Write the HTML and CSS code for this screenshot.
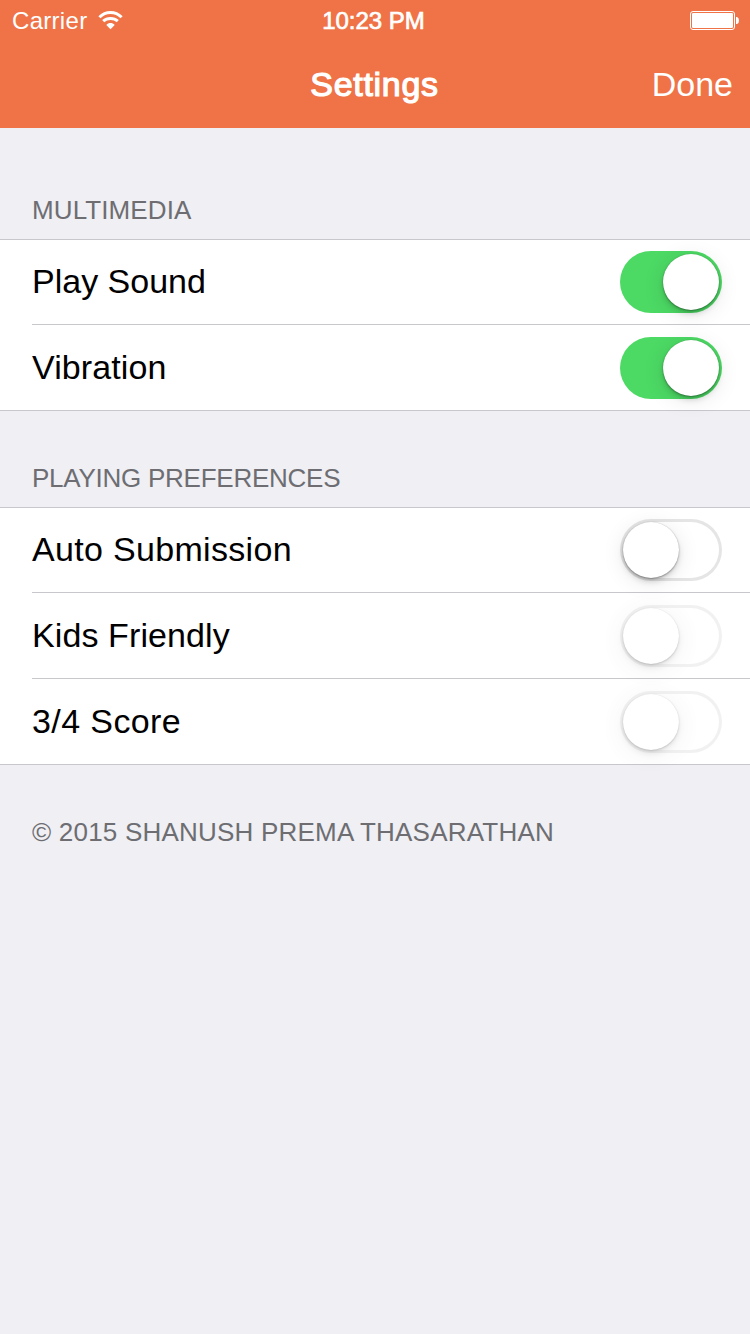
FILE: index.html
```
<!DOCTYPE html>
<html lang="en">
<head>
<meta charset="utf-8">
<title>Settings</title>
<link rel="stylesheet" href="styles.css">
</head>
<body>
<header class="header">
  <div class="status">
    <div class="status-left">
      <span class="carrier">Carrier</span>
      <svg class="wifi" width="26" height="19" viewBox="0 0 26 19" fill="none" stroke="#fff">
        <path d="M1.400 6.200C4.400 3.200 8.300 1.500 12.500 1.500S20.600 3.200 23.600 6.200" stroke-width="3"/>
        <path d="M5.200 10.200C7.200 8.300 9.600 7.400 12.500 7.400S17.800 8.300 19.800 10.200" stroke-width="3"/>
        <path d="M8.300 13.900C10.700 11.400 14.300 11.400 16.700 13.900L12.500 18.200Z" fill="#fff" stroke="none"/>
      </svg>
    </div>
    <span class="time">10:23 PM</span>
    <svg class="battery" width="49" height="19" viewBox="0 0 49 19">
      <rect x=".5" y=".5" width="44" height="18" rx="2.500" fill="none" stroke="#fff"/>
      <rect x="2" y="2" width="41" height="15" rx="1.200" fill="#fff"/>
      <path d="M46 6H47Q49 6.500 49 9.500T47 13H46Z" fill="#fff"/>
    </svg>
  </div>
  <nav class="nav">
    <h1 class="title">Settings</h1>
    <span class="done">Done</span>
  </nav>
</header>
<main>
  <h2 class="section-title section-first">MULTIMEDIA</h2>
  <section class="group">
    <div class="row"><span class="label">Play Sound</span><span class="switch on"><span class="knob"></span></span></div>
    <div class="row"><span class="label label-vibration">Vibration</span><span class="switch on"><span class="knob"></span></span></div>
  </section>
  <h2 class="section-title section-preferences">PLAYING PREFERENCES</h2>
  <section class="group">
    <div class="row"><span class="label label-auto">Auto Submission</span><span class="switch"><span class="knob"></span></span></div>
    <div class="row"><span class="label label-kids">Kids Friendly</span><span class="switch disabled"><span class="knob"></span></span></div>
    <div class="row"><span class="label label-score">3/4 Score</span><span class="switch disabled"><span class="knob"></span></span></div>
  </section>
  <p class="section-title copyright">© 2015 SHANUSH PREMA THASARATHAN</p>
</main>
</body>
</html>
```
FILE: styles.css
```
* { box-sizing: border-box; }
body {
  margin: 0;
  min-height: 1334px;
  background: #efeff4;
  font-family: "Liberation Sans", Arial, sans-serif;
  color: #000;
}
.header { height: 128px; background: #ef7346; color: #fff; }
.status {
  height: 40px;
  padding: 0 11px 0 12px;
  display: grid;
  grid-template-columns: 1fr auto 1fr;
  align-items: center;
  font-size: 24px;
  line-height: 40px;
}
.status-left { display: flex; align-items: center; gap: 11px; }
.carrier { letter-spacing: 0.3px; padding-top: 1px; height: 40px; }
.wifi { display: block; margin-top: 1px; }
.time {
  height: 40px;
  padding-top: 1px;
  padding-right: 4px;
  -webkit-text-stroke: 0.7px #fff;
}
.battery { justify-self: end; display: block; margin-top: 1px; }
.nav {
  height: 88px;
  padding: 0 17px;
  display: grid;
  grid-template-columns: 1fr auto 1fr;
  align-items: center;
  font-size: 34px;
  line-height: 88px;
}
.title {
  grid-column: 2;
  margin: 0;
  padding-right: 1px;
  font-size: 34px;
  font-weight: 400;
  letter-spacing: 0.7px;
  -webkit-text-stroke: 1.2px #fff;
}
.done { justify-self: end; }
.section-title {
  margin: 0;
  padding: 0 32px;
  font-size: 26px;
  line-height: 30px;
  font-weight: 400;
  color: #6d6d72;
}
.section-first { padding-top: 67px; padding-bottom: 14px; letter-spacing: 0.1px; }
.section-preferences { padding-top: 52px; padding-bottom: 14px; letter-spacing: -0.25px; }
.copyright { padding-top: 52px; letter-spacing: 0.21px; }
.group {
  background: #fff;
  border-top: 1px solid #c8c7cc;
  border-bottom: 1px solid #c8c7cc;
}
.row {
  height: 86px;
  margin-left: 32px;
  padding-right: 28px;
  padding-top: 1px;
  display: flex;
  align-items: center;
  justify-content: space-between;
  border-top: 1px solid #c8c7cc;
}
.row:first-child { height: 84px; padding-top: 0; border-top: 0; }
.label { font-size: 34px; line-height: 40px; padding-bottom: 2px; }
.label-vibration { letter-spacing: 0.1px; }
.label-auto { letter-spacing: 0.32px; }
.label-kids { letter-spacing: 0.1px; }
.label-score { letter-spacing: 0.4px; }
.switch {
  width: 102px;
  height: 62px;
  padding: 3px;
  display: flex;
  border-radius: 31px;
  box-shadow: inset 0 0 0 3px #e5e5e5;
}
.on { justify-content: flex-end; background: #4cd964; box-shadow: none; }
.disabled { opacity: 0.5; }
.knob {
  width: 56px;
  height: 56px;
  border-radius: 50%;
  background: #fff;
  box-shadow: 0 4px 22px rgba(0,0,0,.1), 0 4px 6px -1px rgba(0,0,0,.18), 0 1px 2px rgba(0,0,0,.3), 0 0 1px rgba(0,0,0,.2);
}
```
